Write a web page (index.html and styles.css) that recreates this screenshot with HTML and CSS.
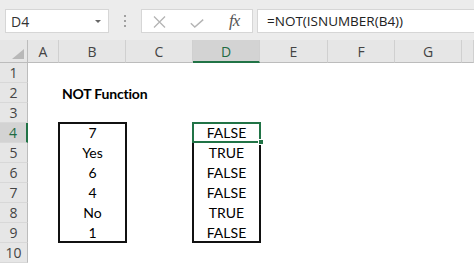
FILE: index.html
```html
<!DOCTYPE html>
<html lang="en">
<head>
    <meta charset="UTF-8">
    <meta name="viewport" content="width=device-width, initial-scale=1.0">
    <title>NOT Function</title>
    <link rel="stylesheet" href="styles.css">
</head>
<body>
    <div class="toolbar">
        <div class="namebox">
            <span>D4</span>
            <span class="arrow"></span>
        </div>
        <div class="grip"><i></i><i></i><i></i></div>
        <div class="fxbox">
            <svg class="icon-x" width="13" height="12" viewBox="0 0 13 12">
                <path d="M1 0.5 L12 11.5 M12 0.5 L1 11.5" stroke="#b4b4b4" stroke-width="1.3" fill="none"/>
            </svg>
            <svg class="icon-check" width="14" height="9" viewBox="0 0 14 9">
                <path d="M0.8 4.2 L4.8 8 L13.2 0.6" stroke="#b4b4b4" stroke-width="1.4" fill="none"/>
            </svg>
            <span class="fx">fx</span>
        </div>
        <div class="formula">=NOT(ISNUMBER(B4))</div>
    </div>

    <div class="sheet">
        <div class="corner"><span></span></div>
        <div class="col-head">A</div>
        <div class="col-head">B</div>
        <div class="col-head">C</div>
        <div class="col-head selected">D</div>
        <div class="col-head">E</div>
        <div class="col-head">F</div>
        <div class="col-head">G</div>
        <div class="col-head"></div>

        <div class="row-head">1</div>
        <div class="row-head">2</div>
        <div class="row-head">3</div>
        <div class="row-head selected">4</div>
        <div class="row-head">5</div>
        <div class="row-head">6</div>
        <div class="row-head">7</div>
        <div class="row-head">8</div>
        <div class="row-head">9</div>
        <div class="row-head">10</div>

        <div class="title">NOT Function</div>

        <div class="range range-b">
            <div class="cells">
                <div>7</div>
                <div>Yes</div>
                <div>6</div>
                <div>4</div>
                <div>No</div>
                <div>1</div>
            </div>
        </div>

        <div class="range range-d">
            <div class="cells">
                <div>FALSE</div>
                <div>TRUE</div>
                <div>FALSE</div>
                <div>FALSE</div>
                <div>TRUE</div>
                <div>FALSE</div>
            </div>
            <div class="cursor"><span class="handle"></span></div>
        </div>
    </div>
</body>
</html>
```

FILE: styles.css
```css
* {
    box-sizing: border-box;
}
body {
    margin: 0;
    background-color: #fff;
    font-family: "Open Sans", "Noto Sans", sans-serif;
    color: #444;
    overflow: hidden;
}

/* formula bar */
.toolbar {
    display: flex;
    height: 40px;
    padding: 9px 0 7px 5px;
    background-color: #ececec;
}
.namebox {
    display: flex;
    align-items: center;
    width: 104px;
    background-color: #fff;
    border: 1px solid #d6d6d6;
    padding-left: 5px;
    font-size: 14px;
    color: #333;
}
.arrow {
    margin-left: auto;
    margin-right: 7px;
    border-left: 3px solid transparent;
    border-right: 3px solid transparent;
    border-top: 3px solid #666;
}
.grip {
    width: 32px;
    display: flex;
    flex-direction: column;
    align-items: center;
    justify-content: center;
    gap: 3px;
}
.grip i {
    width: 2px;
    height: 2px;
    background-color: #a0a0a0;
}
.fxbox {
    display: flex;
    align-items: center;
    width: 112px;
    background-color: #fff;
    border: 1px solid #d6d6d6;
    padding-left: 11px;
}
.icon-x {
    margin-top: 1px;
}
.icon-check {
    margin-left: 24px;
    margin-top: 5px;
}
.fx {
    margin-left: 25px;
    font-family: "Liberation Serif", serif;
    font-style: italic;
    font-size: 17px;
    color: #555;
    letter-spacing: -1px;
}
.formula {
    flex: 1;
    margin-left: 4px;
    background-color: #fff;
    border: 1px solid #d6d6d6;
    border-right: none;
    padding-left: 9px;
    display: flex;
    align-items: center;
    font-size: 13.5px;
    color: #222;
}

/* grid */
.sheet {
    display: grid;
    grid-template-columns: 28px 31px 67px 67px 67px 68px 67px 67px 1fr;
    grid-template-rows: 23px repeat(10, 20px);
    font-size: 14px;
}
.corner,
.col-head {
    background-color: #e6e6e6;
    border-bottom: 1px solid #bcbcbc;
    border-right: 1px solid #d0d0d0;
    display: flex;
    align-items: center;
    justify-content: center;
    padding-top: 1px;
}
.corner {
    border-right: 1px solid #bcbcbc;
    justify-content: flex-end;
    align-items: flex-end;
    padding: 0 3px 3px 0;
}
.corner span {
    width: 12px;
    height: 10px;
    background-color: #b8b8b8;
    clip-path: polygon(100% 0, 100% 100%, 0 100%);
}
.col-head.selected {
    background-color: #d3d3d3;
    border-bottom: 2px solid #217346;
    color: #1f6b42;
}
.row-head {
    grid-column: 1;
    background-color: #e6e6e6;
    border-right: 1px solid #bcbcbc;
    border-bottom: 1px solid #d8d8d8;
    display: flex;
    align-items: center;
    justify-content: center;
}
.row-head.selected {
    background-color: #d3d3d3;
    border-right: 2px solid #217346;
    color: #1f6b42;
}

/* cells */
.title {
    grid-row: 3;
    grid-column: 3 / span 2;
    padding-left: 3px;
    display: flex;
    align-items: center;
    font-family: "Lato", sans-serif;
    font-weight: bold;
    font-size: 14px;
    letter-spacing: -0.2px;
    color: #000;
    white-space: nowrap;
}
.range {
    grid-row: 5 / 11;
    position: relative;
    margin: -1px -1px 0 -1px;
    border: 2px solid #111;
    font-family: "Lato", sans-serif;
    font-size: 14px;
    color: #000;
}
.range-b {
    grid-column: 3;
}
.range-d {
    grid-column: 5;
}
.cells {
    margin-top: -1px;
}
.cells div {
    height: 20px;
    line-height: 20px;
    text-align: center;
}
.cursor {
    position: absolute;
    top: -2px;
    left: -2px;
    right: -2px;
    height: 21px;
    border: 2px solid #217346;
}
.handle {
    position: absolute;
    right: -5px;
    bottom: -4px;
    width: 6px;
    height: 6px;
    background-color: #217346;
    border: 1px solid #fff;
}
```
